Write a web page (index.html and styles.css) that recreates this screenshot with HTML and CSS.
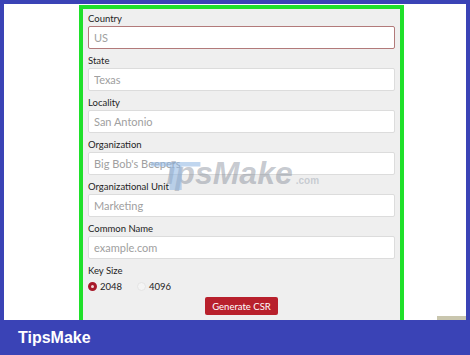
FILE: index.html
```html
<!DOCTYPE html>
<html lang="en">
<head>
  <meta charset="UTF-8">
  <meta name="viewport" content="width=device-width, initial-scale=1.0">
  <title>CSR Generator</title>
  <link rel="stylesheet" href="styles.css">
</head>
<body>

  <div class="frame">
    <form class="panel">
      <div class="field">
        <label class="field-label">Country</label>
        <input class="field-input invalid" type="text" placeholder="US">
      </div>
      <div class="field">
        <label class="field-label">State</label>
        <input class="field-input" type="text" placeholder="Texas">
      </div>
      <div class="field">
        <label class="field-label">Locality</label>
        <input class="field-input" type="text" placeholder="San Antonio">
      </div>
      <div class="field">
        <label class="field-label">Organization</label>
        <input class="field-input" type="text" placeholder="Big Bob's Beepers">
      </div>
      <div class="field">
        <label class="field-label">Organizational Unit</label>
        <input class="field-input" type="text" placeholder="Marketing">
      </div>
      <div class="field">
        <label class="field-label">Common Name</label>
        <input class="field-input" type="text" placeholder="example.com">
      </div>

      <div class="field-label">Key Size</div>
      <div class="radios">
        <span class="radio"><span class="dot checked"></span>2048</span>
        <span class="radio"><span class="dot"></span>4096</span>
      </div>

      <div class="actions">
        <button type="button" class="btn">Generate CSR</button>
      </div>
    </form>

    <div class="watermark"><span class="wm-t">T</span>ipsMake<span class="wm-com">.com</span></div>
    <div class="corner-bit"></div>
  </div>

  <footer class="brand-bar">TipsMake</footer>

</body>
</html>
```

FILE: styles.css
```css
body { margin: 0; background: #3a43b6; font-family: Lato, "Open Sans", sans-serif; height: 355px; overflow: hidden; }

.frame { position: relative; margin: 4px 4px 0 4px; height: 316px; background: #fff; overflow: hidden; }

.panel { margin: 1px 0 0 75px; width: 307px; height: 311px; border: 4px solid #1fe02a; border-bottom: none; background: #efefef; padding: 0 5px; }

.field { display: flex; flex-direction: column; }
.field-label { display: block; height: 19px; line-height: 19px; font-size: 9.5px; color: #1e1e1e; padding-top: 2px; box-sizing: border-box; }
.field:first-child .field-label { height: 17px; line-height: 17px; padding-top: 1px; }

.field-input { height: 23px; box-sizing: border-box; border: 1px solid #dcdcdc; border-radius: 2px; background: #fff; padding: 0 5px; font-family: inherit; font-size: 11px; outline: none; }
.field-input::placeholder { color: #a0a0a0; }
.field-input.invalid { border-color: #b27a7a; }

.radios { display: flex; gap: 15px; height: 10px; margin-top: 3px; align-items: center; font-size: 9.5px; color: #222; }
.radio { display: flex; align-items: center; gap: 3px; }
.dot { width: 9px; height: 9px; border-radius: 50%; background: #f4f4f4; border: 1px solid #e4e4e4; box-sizing: border-box; }
.dot.checked { background: #f0d6d8; border: 3px solid #a81a2b; }

.actions { display: flex; justify-content: center; padding-top: 6px; }
.btn { width: 73px; height: 18px; padding: 0; border: none; border-radius: 2px; background: #b8202c; color: #fff; font-family: inherit; font-size: 9.5px; }

.watermark { position: absolute; left: 146px; top: 150px; font-family: "Liberation Sans", Arial, sans-serif; font-weight: bold; font-style: italic; font-size: 32px; color: rgba(130, 138, 150, 0.45); white-space: nowrap; }
.wm-t { display: inline-block; color: rgba(140, 180, 225, 0.55); font-size: 40px; transform: scaleX(2.1); transform-origin: left bottom; margin-right: -8px; vertical-align: -6px; font-style: normal; }
.wm-com { font-size: 10px; font-style: normal; margin-left: 3px; color: rgba(160, 168, 180, 0.5); }

.corner-bit { position: absolute; right: 0; bottom: 0; width: 29px; height: 4px; background: #c9c6ae; }

.brand-bar { height: 35px; line-height: 36px; padding-left: 18px; color: #fff; font-family: "Liberation Sans", Arial, sans-serif; font-weight: bold; font-size: 16px; }
```
